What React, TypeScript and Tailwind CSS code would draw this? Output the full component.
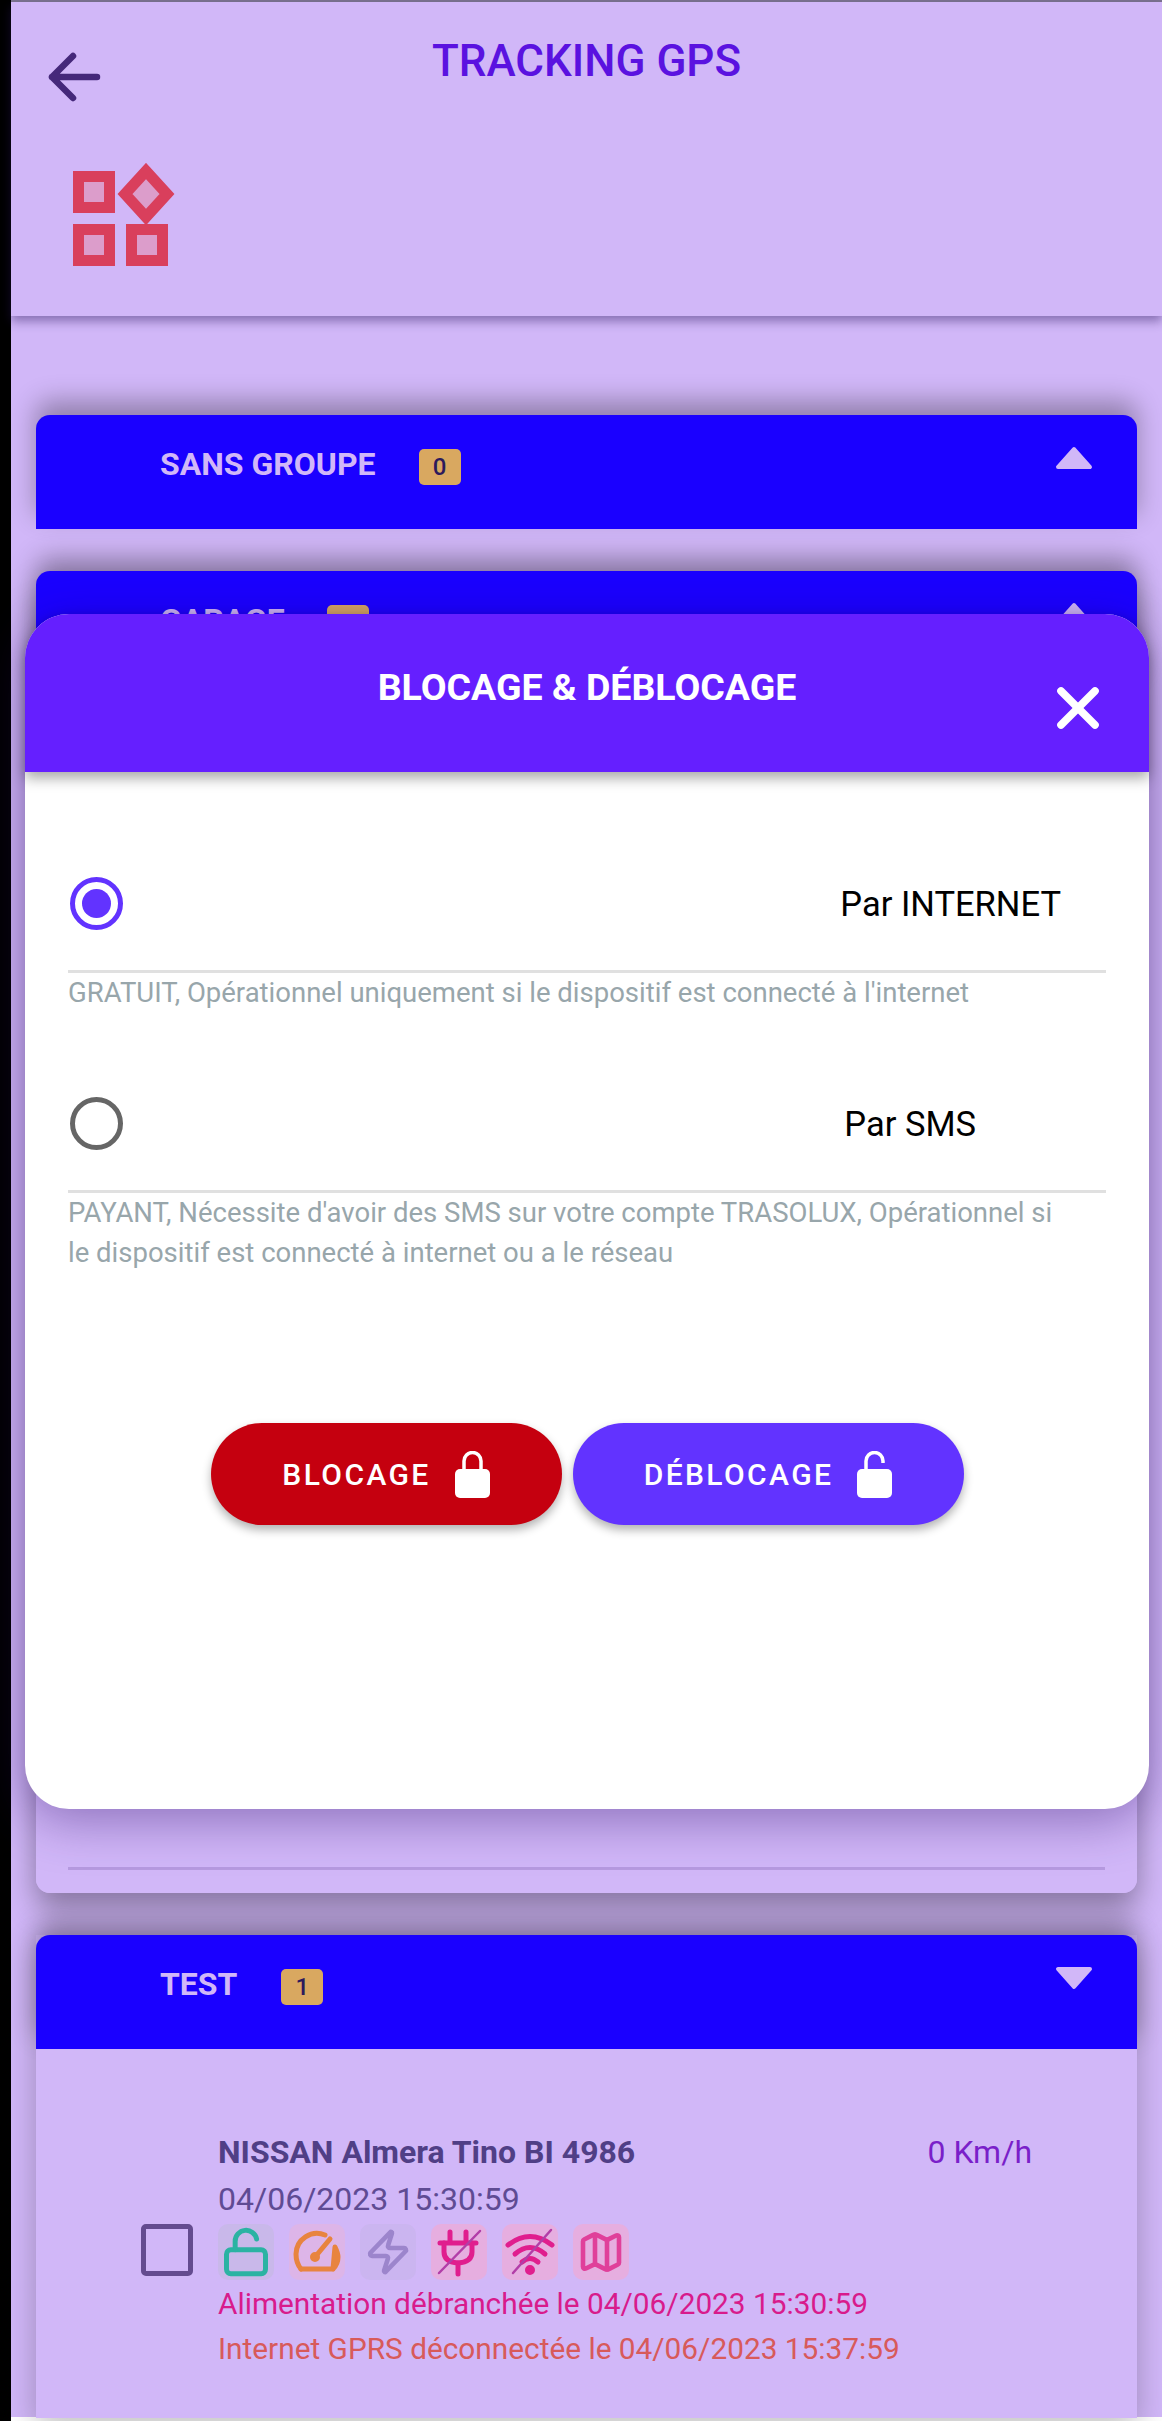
import { LockOpen, Map as MapIcon, X, Zap } from 'lucide-react';
import type { ReactNode } from 'react';

// Grid logo: three squares and a diamond
function Logo() {
  return (
    <svg width="104" height="104" viewBox="0 0 104 104" className="block">
      <g fill="#dc9dcb" stroke="#d93f5c" strokeWidth="11">
        <rect x="6.5" y="13.5" width="31" height="31" />
        <rect x="6.5" y="66.5" width="31" height="31" />
        <rect x="59.5" y="66.5" width="31" height="31" />
        <path d="M74 8 L95 31 L74 54 L53 31 Z" />
      </g>
    </svg>
  );
}

function Triangle({ up }: { up: boolean }) {
  return (
    <svg width="38" height="24" viewBox="0 0 38 24" className="block">
      <path
        d={up ? 'M19 3 L35 21 L3 21 Z' : 'M3 3 L35 3 L19 21 Z'}
        fill="#d1b7f8"
        stroke="#d1b7f8"
        strokeWidth="4"
        strokeLinejoin="round"
      />
    </svg>
  );
}

function GroupHeader({ label, count, up, gap }: { label: string; count: string; up: boolean; gap: string }) {
  return (
    <div className="relative flex h-[114px] items-start rounded-t-[14px] bg-[#1a00ff] pl-[124px] pr-[44px] pt-[32px] shadow-[0_-14px_26px_rgba(0,0,0,0.3)]">
      <span className="text-[32px] leading-[35px] font-bold text-[#d1b7f8]">{label}</span>
      <span className={`${gap} mt-[2px] flex h-[36px] w-[42px] items-center justify-center rounded-[5px] bg-[#d9a860] text-[24px] font-medium text-[#2c1a5c]`}>
        {count}
      </span>
      <span className="ml-auto -mt-[1px]">
        <Triangle up={up} />
      </span>
    </div>
  );
}

function Tile({ bg, children }: { bg: string; children: ReactNode }) {
  return <div className={`flex h-[56px] w-[56px] items-center justify-center rounded-[10px] ${bg}`}>{children}</div>;
}

function GaugeIcon() {
  return (
    <svg width="50" height="50" viewBox="0 0 50 50" fill="none" stroke="#e8843f" strokeWidth="5" strokeLinecap="round" strokeLinejoin="round">
      <path d="M9 42 Q4 36 4 27 A21 21 0 0 1 33 8" />
      <path d="M43 20 Q46 26 46 30 Q46 37 41 42 Z M9 42 H41" />
      <path d="M23 30 L38 12" />
      <circle cx="23" cy="30" r="2.5" fill="#e8843f" />
    </svg>
  );
}

function PlugOffIcon() {
  return (
    <svg width="50" height="50" viewBox="0 0 50 50" fill="none" stroke="#e01e8e" strokeWidth="5" strokeLinecap="round" strokeLinejoin="round">
      <path d="M16 5 V16 M32 5 V16 M6 16 H42" />
      <path d="M10 16 V25 Q10 35 24 36 Q38 35 38 25 V16" />
      <path d="M24 36 V47" />
      <path d="M5 46 L46 4" strokeWidth="2.5" stroke="#b23ea8" />
    </svg>
  );
}

function WifiOffIcon() {
  return (
    <svg width="50" height="50" viewBox="0 0 50 50" fill="none" stroke="#e01e8e" strokeWidth="5" strokeLinecap="round">
      <path d="M3 18 Q25 1 47 18" />
      <path d="M10 27 Q25 14 40 27" />
      <path d="M17 35 Q25 28 33 35" />
      <circle cx="25" cy="43" r="2.5" fill="#e01e8e" />
      <path d="M8 46 L46 3" strokeWidth="2.5" stroke="#b23ea8" />
    </svg>
  );
}

function PadLock({ open }: { open: boolean }) {
  return (
    <svg width="35" height="47" viewBox="0 0 35 47" className="block">
      <path
        d={open ? 'M9 21 V10 A8.5 8.5 0 0 1 26 10 V12' : 'M9 21 V10 A8.5 8.5 0 0 1 26 10 V21'}
        fill="none"
        stroke="#ffffff"
        strokeWidth="3.5"
      />
      <rect x="0" y="18" width="35" height="29" rx="5" fill="#ffffff" />
    </svg>
  );
}

function Radio({ checked }: { checked: boolean }) {
  return (
    <span className={`flex h-[53px] w-[53px] shrink-0 items-center justify-center rounded-full border-[5px] ${checked ? 'border-[#6233ff]' : 'border-[#666666]'}`}>
      {checked && <span className="h-[29px] w-[29px] rounded-full bg-[#6233ff]" />}
    </span>
  );
}

function LockButton({ label, open, className }: { label: string; open: boolean; className: string }) {
  return (
    <button className={`flex h-[102px] items-center justify-center gap-[24px] rounded-full text-[30px] font-medium tracking-[2.4px] text-white shadow-[0_5px_10px_rgba(0,0,0,0.3)] ${className}`}>
      {label}
      <PadLock open={open} />
    </button>
  );
}

export default function App() {
  return (
    <div className="flex h-[2421px] w-[1162px] overflow-hidden bg-white font-['Roboto',sans-serif]">
      <div className="w-[11px] shrink-0 bg-black" />

      <main className="relative h-[2417px] flex-1 bg-[#d1b7f8]">
        <div className="h-[2px] bg-[#7d7590]" />

        {/* Top bar */}
        <header className="relative h-[314px] bg-[#d1b7f8] shadow-[0_5px_10px_rgba(40,20,90,0.45)]">
          <div className="grid h-[100px] grid-cols-[1fr_auto_1fr] items-start">
            <svg width="56" height="50" viewBox="0 0 56 50" fill="none" stroke="#45287a" strokeWidth="6.5" strokeLinecap="round" strokeLinejoin="round" className="ml-[36px] mt-[50px]">
              <path d="M5 25 H50 M26 4 L5 25 L26 46" />
            </svg>
            <h1 className="mt-[36px] text-[44px] leading-[46px] font-medium text-[#5a12e0]">TRACKING GPS</h1>
          </div>
          <div className="ml-[61px] mt-[61px] w-[104px]">
            <Logo />
          </div>
        </header>

        {/* Groups */}
        <div className="relative px-[25px] pt-[99px]">
          <GroupHeader label="SANS GROUPE" count="0" up gap="ml-[43px]" />

          <div className="mt-[42px] rounded-[14px] shadow-[0_15px_30px_rgba(0,0,0,0.36)]">
            <GroupHeader label="GARAGE" count="1" up gap="ml-[42px]" />
            <div className="flex h-[1208px] flex-col justify-end rounded-b-[14px] bg-[#d1b7f8] px-[32px] pb-[23px]">
              <div className="h-[3px] bg-[#b69ae0]" />
            </div>
          </div>

          <div className="mt-[42px] shadow-[0_10px_30px_rgba(0,0,0,0.25)]">
            <GroupHeader label="TEST" count="1" up={false} gap="ml-[44px]" />
            <div className="relative flex h-[369px] bg-[#d1b7f8] pl-[105px]">
              <div className="mt-[175px] h-[52px] w-[52px] shrink-0 rounded-[5px] border-[5px] border-[#644b8f]" />
              <div className="ml-[25px] flex-1 pt-[83px]">
                <div className="flex items-center justify-between pr-[105px]">
                  <span className="text-[32px] leading-[40px] font-bold text-[#503f86]">NISSAN Almera Tino BI 4986</span>
                  <span className="text-[32px] leading-[40px] text-[#7a1fc9]">0 Km/h</span>
                </div>
                <div className="mt-[7px] text-[32px] leading-[40px] text-[#5f4b93]">04/06/2023 15:30:59</div>
                <div className="mt-[5px] flex gap-[15px]">
                  <Tile bg="bg-[#c9b8ea]">
                    <LockOpen size={52} stroke="#2bb3a3" strokeWidth={2.3} />
                  </Tile>
                  <Tile bg="bg-[#ddb5e8]">
                    <GaugeIcon />
                  </Tile>
                  <Tile bg="bg-[#cbb5f0]">
                    <Zap size={48} stroke="#9c85cc" strokeWidth={2.3} />
                  </Tile>
                  <Tile bg="bg-[#e6aee0]">
                    <PlugOffIcon />
                  </Tile>
                  <Tile bg="bg-[#e6aee0]">
                    <WifiOffIcon />
                  </Tile>
                  <Tile bg="bg-[#e6aee0]">
                    <MapIcon size={48} stroke="#e0409a" strokeWidth={2.3} />
                  </Tile>
                </div>
                <div className="mt-[4px] text-[29.8px] leading-[40px] text-[#d81b8c]">Alimentation débranchée le 04/06/2023 15:30:59</div>
                <div className="mt-[5px] text-[29.8px] leading-[40px] text-[#d85a5a]">Internet GPRS déconnectée le 04/06/2023 15:37:59</div>
              </div>
            </div>
          </div>
        </div>

        {/* Modal sheet over the page */}
        <section className="absolute left-[14px] top-[614px] h-[1195px] w-[1124px] rounded-[44px] bg-white shadow-[0_12px_50px_rgba(40,10,100,0.4)]">
          <div className="relative flex h-[158px] justify-center rounded-t-[44px] bg-[#651fff] pt-[48px] shadow-[0_6px_14px_rgba(0,0,0,0.35)]">
            <h2 className="text-[37.5px] leading-[50px] font-bold text-white">BLOCAGE &amp; DÉBLOCAGE</h2>
            <X className="absolute right-[37px] top-[60px]" size={68} stroke="#ffffff" strokeWidth={2.7} />
          </div>

          <div className="px-[43px] pt-[105px]">
            <div className="flex items-center justify-between border-b-[3px] border-[#e0e0e0] pb-[40px] pl-[2px] pr-[45px]">
              <Radio checked />
              <span className="text-[34.5px] leading-[52px] text-black">Par INTERNET</span>
            </div>
            <p className="pr-[40px] text-[27.5px] leading-[40px] text-[#98a6ab]">GRATUIT, Opérationnel uniquement si le dispositif est connecté à l'internet</p>

            <div className="mt-[84px] flex items-center justify-between border-b-[3px] border-[#e0e0e0] pb-[40px] pl-[2px] pr-[130px]">
              <Radio checked={false} />
              <span className="text-[34.5px] leading-[52px] text-black">Par SMS</span>
            </div>
            <p className="pr-[40px] text-[27.5px] leading-[40px] text-[#98a6ab]">
              PAYANT, Nécessite d'avoir des SMS sur votre compte TRASOLUX, Opérationnel si le dispositif est connecté à internet ou a le réseau
            </p>
          </div>

          <div className="mt-[150px] flex justify-center gap-[11px]">
            <LockButton label="BLOCAGE" open={false} className="w-[351px] bg-[#c5000f]" />
            <LockButton label="DÉBLOCAGE" open className="w-[391px] bg-[#6233ff]" />
          </div>
        </section>
      </main>
    </div>
  );
}
